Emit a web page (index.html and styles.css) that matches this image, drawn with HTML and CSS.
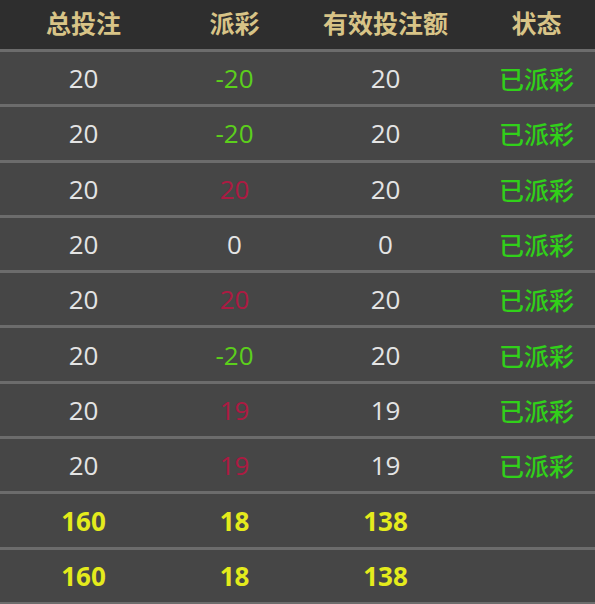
FILE: index.html
```html
<!DOCTYPE html>
<html lang="zh">
<head>
    <meta charset="UTF-8">
    <meta name="viewport" content="width=device-width, initial-scale=1.0">
    <title>投注记录</title>
    <link rel="stylesheet" href="styles.css">
</head>
<body>
    <div class="table">
        <div class="row head">
            <div>总投注</div>
            <div>派彩</div>
            <div>有效投注额</div>
            <div>状态</div>
        </div>
        <div class="row">
            <div>20</div><div class="win">-20</div><div>20</div><div class="status">已派彩</div>
        </div>
        <div class="row">
            <div>20</div><div class="win">-20</div><div>20</div><div class="status">已派彩</div>
        </div>
        <div class="row">
            <div>20</div><div class="lose">20</div><div>20</div><div class="status">已派彩</div>
        </div>
        <div class="row">
            <div>20</div><div>0</div><div>0</div><div class="status">已派彩</div>
        </div>
        <div class="row">
            <div>20</div><div class="lose">20</div><div>20</div><div class="status">已派彩</div>
        </div>
        <div class="row">
            <div>20</div><div class="win">-20</div><div>20</div><div class="status">已派彩</div>
        </div>
        <div class="row">
            <div>20</div><div class="lose">19</div><div>19</div><div class="status">已派彩</div>
        </div>
        <div class="row">
            <div>20</div><div class="lose">19</div><div>19</div><div class="status">已派彩</div>
        </div>
        <div class="row total">
            <div>160</div><div>18</div><div>138</div><div></div>
        </div>
        <div class="row total last">
            <div>160</div><div>18</div><div>138</div><div></div>
        </div>
    </div>
</body>
</html>
```

FILE: styles.css
```css
body {
    margin: 0;
    background-color: #464646;
    font-family: 'Open Sans', 'Noto Sans CJK SC', sans-serif;
    overflow: hidden;
}
.table {
    width: 612px;
}
.row {
    display: grid;
    grid-template-columns: repeat(4, 151px);
    align-items: center;
    text-align: center;
    box-sizing: border-box;
    padding-left: 8px;
    height: 55.3px;
    border-top: 3px solid #6c6c6c;
    font-size: 26px;
    color: #e4e4e4;
}
.row.last {
    height: 58.3px;
    border-bottom: 3px solid #6c6c6c;
}
.head {
    height: 49px;
    border-top: none;
    padding-bottom: 5px;
    background-color: #2e2e2e;
    color: #d8c487;
    font-family: 'Noto Sans CJK SC', sans-serif;
    font-weight: bold;
    font-size: 25px;
}
.win {
    color: #5ccf1c;
}
.lose {
    color: #ad1a42;
}
.status {
    color: #31d01a;
    font-family: 'Noto Sans CJK SC', sans-serif;
    font-weight: 500;
    font-size: 25px;
}
.total {
    color: #e4eb1c;
    font-weight: bold;
}
```
